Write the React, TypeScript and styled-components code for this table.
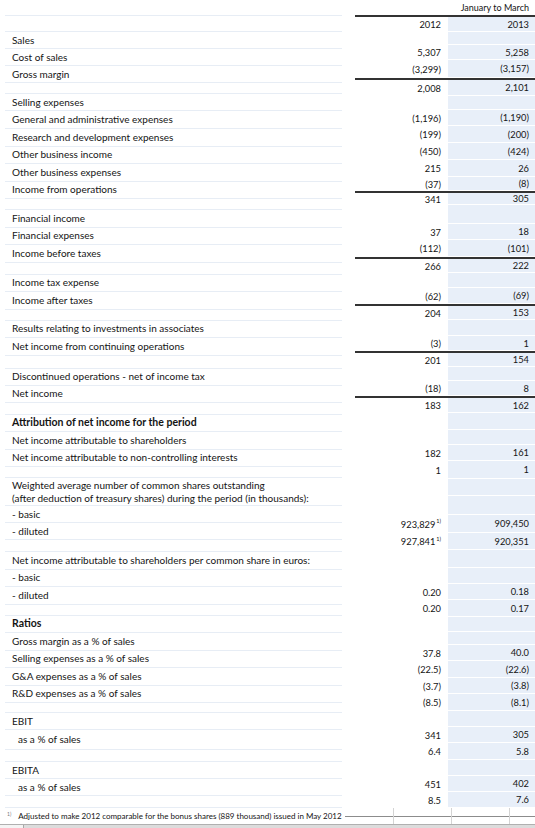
import React from 'react'
import styled, { createGlobalStyle } from 'styled-components'

const GlobalStyle = createGlobalStyle`
  * { box-sizing: border-box; }
  html, body { margin: 0; padding: 0; background: #fff; }
  body { font-family: Lato, "Open Sans", sans-serif; color: #141414; }
`

const Sheet = styled.div`
  width: 535px;
  height: 828px;
  display: flex;
  flex-direction: column;
  overflow: hidden;
`

const Body = styled.div`
  display: flex;
  align-items: flex-start;
`

const LabelPanel = styled.div`
  width: 337px;
  margin-left: 5px;
  display: flex;
  flex-direction: column;
`

const LabelRow = styled.div<{ $h: number; $indent?: boolean; $bold?: boolean }>`
  height: ${p => p.$h}px;
  border-bottom: 1px solid #e7edf5;
  padding-left: ${p => (p.$indent ? 13 : 7)}px;
  display: flex;
  flex-direction: column;
  justify-content: center;
  font-size: ${p => (p.$bold ? 10.5 : 10)}px;
  font-weight: ${p => (p.$bold ? 700 : 400)};
  line-height: 13px;
  white-space: nowrap;
`

const ValuePanel = styled.div`
  margin-left: 13px;
  width: 180px;
  display: flex;
  flex-direction: column;
`

const HeaderRow = styled.div`
  height: 17px;
  border-bottom: 2px solid #333;
  padding-right: 6px;
  text-align: right;
  font-size: 9px;
  line-height: 15px;
`

const ValueRow = styled.div<{ $h: number; $total?: boolean }>`
  height: ${p => p.$h}px;
  display: grid;
  grid-template-columns: 93px 87px;
  border-top: ${p => (p.$total ? '2px solid #333' : 'none')};
`

const Cell = styled.div<{ $tint?: boolean }>`
  display: flex;
  align-items: center;
  justify-content: flex-end;
  padding-right: ${p => (p.$tint ? 6 : 7)}px;
  background: ${p => (p.$tint ? '#e8eff9' : 'transparent')};
  border-bottom: ${p => (p.$tint ? '1px solid #fff' : 'none')};
  font-size: 9.3px;
  white-space: nowrap;
`

const Sup = styled.span`
  font-size: 5.5px;
  align-self: flex-start;
  margin-top: 3px;
  margin-left: 1px;
`

const Footer = styled.div`
  height: 16px;
  display: flex;
  align-items: stretch;
`

const Footnote = styled.div`
  padding-left: 7px;
  display: flex;
  align-items: center;
  font-size: 8px;
  white-space: nowrap;
`

const FootMark = styled.span`
  font-size: 5px;
  margin-right: 7px;
  align-self: flex-start;
  margin-top: 3px;
  color: #777;
`

const RuleFill = styled.div<{ $w?: number; $edge?: boolean }>`
  ${p => (p.$w ? `width: ${p.$w}px;` : 'flex: 1; margin-left: 3px;')}
  border-left: ${p => (p.$edge ? '1px solid #d4d4d4' : 'none')};
  background: linear-gradient(#8c8c8c, #8c8c8c) left 55% / 100% 1px no-repeat;
`

const BottomBar = styled.div`
  height: 4px;
  display: flex;
  background: #dcdcdc;
  border-top: 1px solid #b0b0b0;
`

const SheetTab = styled.div`
  width: 24px;
  background: #f4f4f4;
  border-right: 1px solid #a8a8a8;
`

type Label = { t?: string; t2?: string; h: number; indent?: boolean; bold?: boolean }

const labels: Label[] = [
  { h: 16 }, { h: 16 },
  { t: 'Sales', h: 17 },
  { t: 'Cost of sales', h: 17 },
  { t: 'Gross margin', h: 17 },
  { h: 11 },
  { t: 'Selling expenses', h: 17 },
  { t: 'General and administrative expenses', h: 18 },
  { t: 'Research and development expenses', h: 17.5 },
  { t: 'Other business income', h: 17.5 },
  { t: 'Other business expenses', h: 17.5 },
  { t: 'Income from operations', h: 17.5 },
  { h: 11 },
  { t: 'Financial income', h: 17.5 },
  { t: 'Financial expenses', h: 17.5 },
  { t: 'Income before taxes', h: 17.5 },
  { h: 12 },
  { t: 'Income tax expense', h: 17.5 },
  { t: 'Income after taxes', h: 17.5 },
  { h: 11 },
  { t: 'Results relating to investments in associates', h: 17.5 },
  { t: 'Net income from continuing operations', h: 17.5 },
  { h: 13 },
  { t: 'Discontinued operations - net of income tax', h: 17 },
  { t: 'Net income', h: 17 },
  { h: 12 },
  { t: 'Attribution of net income for the period', h: 17.5, bold: true },
  { t: 'Net income attributable to shareholders', h: 17.5 },
  { t: 'Net income attributable to non-controlling interests', h: 17.5 },
  { h: 11 },
  {
    t: 'Weighted average number of common shares outstanding',
    t2: '(after deduction of treasury shares) during the period (in thousands):',
    h: 28,
  },
  { t: '- basic', h: 17 },
  { t: '- diluted', h: 17 },
  { h: 12 },
  { t: 'Net income attributable to shareholders per common share in euros:', h: 17.5 },
  { t: '- basic', h: 17.5 },
  { t: '- diluted', h: 17.5 },
  { h: 11 },
  { t: 'Ratios', h: 17.5, bold: true },
  { t: 'Gross margin as a % of sales', h: 17.5 },
  { t: 'Selling expenses as a % of sales', h: 17.5 },
  { t: 'G&A expenses as a % of sales', h: 17.5 },
  { t: 'R&D expenses as a % of sales', h: 17.5 },
  { h: 10 },
  { t: 'EBIT', h: 17 },
  { t: 'as a % of sales', h: 20, indent: true },
  { h: 12 },
  { t: 'EBITA', h: 17 },
  { t: 'as a % of sales', h: 17, indent: true },
  { h: 12 },
]

type Value = { a?: string; b?: string; h: number; total?: boolean; sup?: boolean }

const values: Value[] = [
  { a: '2012', b: '2013', h: 15 },
  { h: 13 },
  { a: '5,307', b: '5,258', h: 15 },
  { a: '(3,299)', b: '(3,157)', h: 18 },
  { a: '2,008', b: '2,101', h: 18, total: true },
  { h: 14 },
  { a: '(1,196)', b: '(1,190)', h: 16 },
  { a: '(199)', b: '(200)', h: 17 },
  { a: '(450)', b: '(424)', h: 17 },
  { a: '215', b: '26', h: 17 },
  { a: '(37)', b: '(8)', h: 14 },
  { a: '341', b: '305', h: 14, total: true },
  { h: 19 },
  { a: '37', b: '18', h: 16 },
  { a: '(112)', b: '(101)', h: 17 },
  { a: '266', b: '222', h: 16, total: true },
  { h: 15 },
  { a: '(62)', b: '(69)', h: 16 },
  { a: '204', b: '153', h: 16, total: true },
  { h: 16 },
  { a: '(3)', b: '1', h: 15 },
  { a: '201', b: '154', h: 16, total: true },
  { h: 14 },
  { a: '(18)', b: '8', h: 15 },
  { a: '183', b: '162', h: 17, total: true },
  { h: 17 },
  { h: 15 },
  { a: '182', b: '161', h: 16 },
  { a: '1', b: '1', h: 18 },
  { h: 17 },
  { h: 19 },
  { a: '923,829', b: '909,450', h: 18, sup: true },
  { a: '927,841', b: '920,351', h: 17, sup: true },
  { h: 18 },
  { h: 16 },
  { a: '0.20', b: '0.18', h: 16 },
  { a: '0.20', b: '0.17', h: 17 },
  { h: 15 },
  { h: 13 },
  { a: '37.8', b: '40.0', h: 16 },
  { a: '(22.5)', b: '(22.6)', h: 17 },
  { a: '(3.7)', b: '(3.8)', h: 16 },
  { a: '(8.5)', b: '(8.1)', h: 17 },
  { h: 16 },
  { a: '341', b: '305', h: 16 },
  { a: '6.4', b: '5.8', h: 17 },
  { h: 16 },
  { a: '451', b: '402', h: 16 },
  { a: '8.5', b: '7.6', h: 16 },
]

export default function App() {
  return (
    <Sheet>
      <GlobalStyle />
      <Body>
        <LabelPanel>
          {labels.map((l, i) => (
            <LabelRow key={i} $h={l.h} $indent={l.indent} $bold={l.bold}>
              {l.t && <span>{l.t}</span>}
              {l.t2 && <span>{l.t2}</span>}
            </LabelRow>
          ))}
        </LabelPanel>
        <ValuePanel>
          <HeaderRow>January to March</HeaderRow>
          {values.map((v, i) => (
            <ValueRow key={i} $h={v.h} $total={v.total}>
              <Cell>
                {v.a}
                {v.sup && <Sup>1)</Sup>}
              </Cell>
              <Cell $tint>{v.b}</Cell>
            </ValueRow>
          ))}
        </ValuePanel>
      </Body>
      <Footer>
        <Footnote>
          <FootMark>1)</FootMark>
          Adjusted to make 2012 comparable for the bonus shares (889 thousand) issued in May 2012
        </Footnote>
        <RuleFill />
        <RuleFill $w={58} $edge />
        <RuleFill $w={58} $edge />
        <RuleFill $w={26} $edge />
      </Footer>
      <BottomBar>
        <SheetTab />
      </BottomBar>
    </Sheet>
  )
}
